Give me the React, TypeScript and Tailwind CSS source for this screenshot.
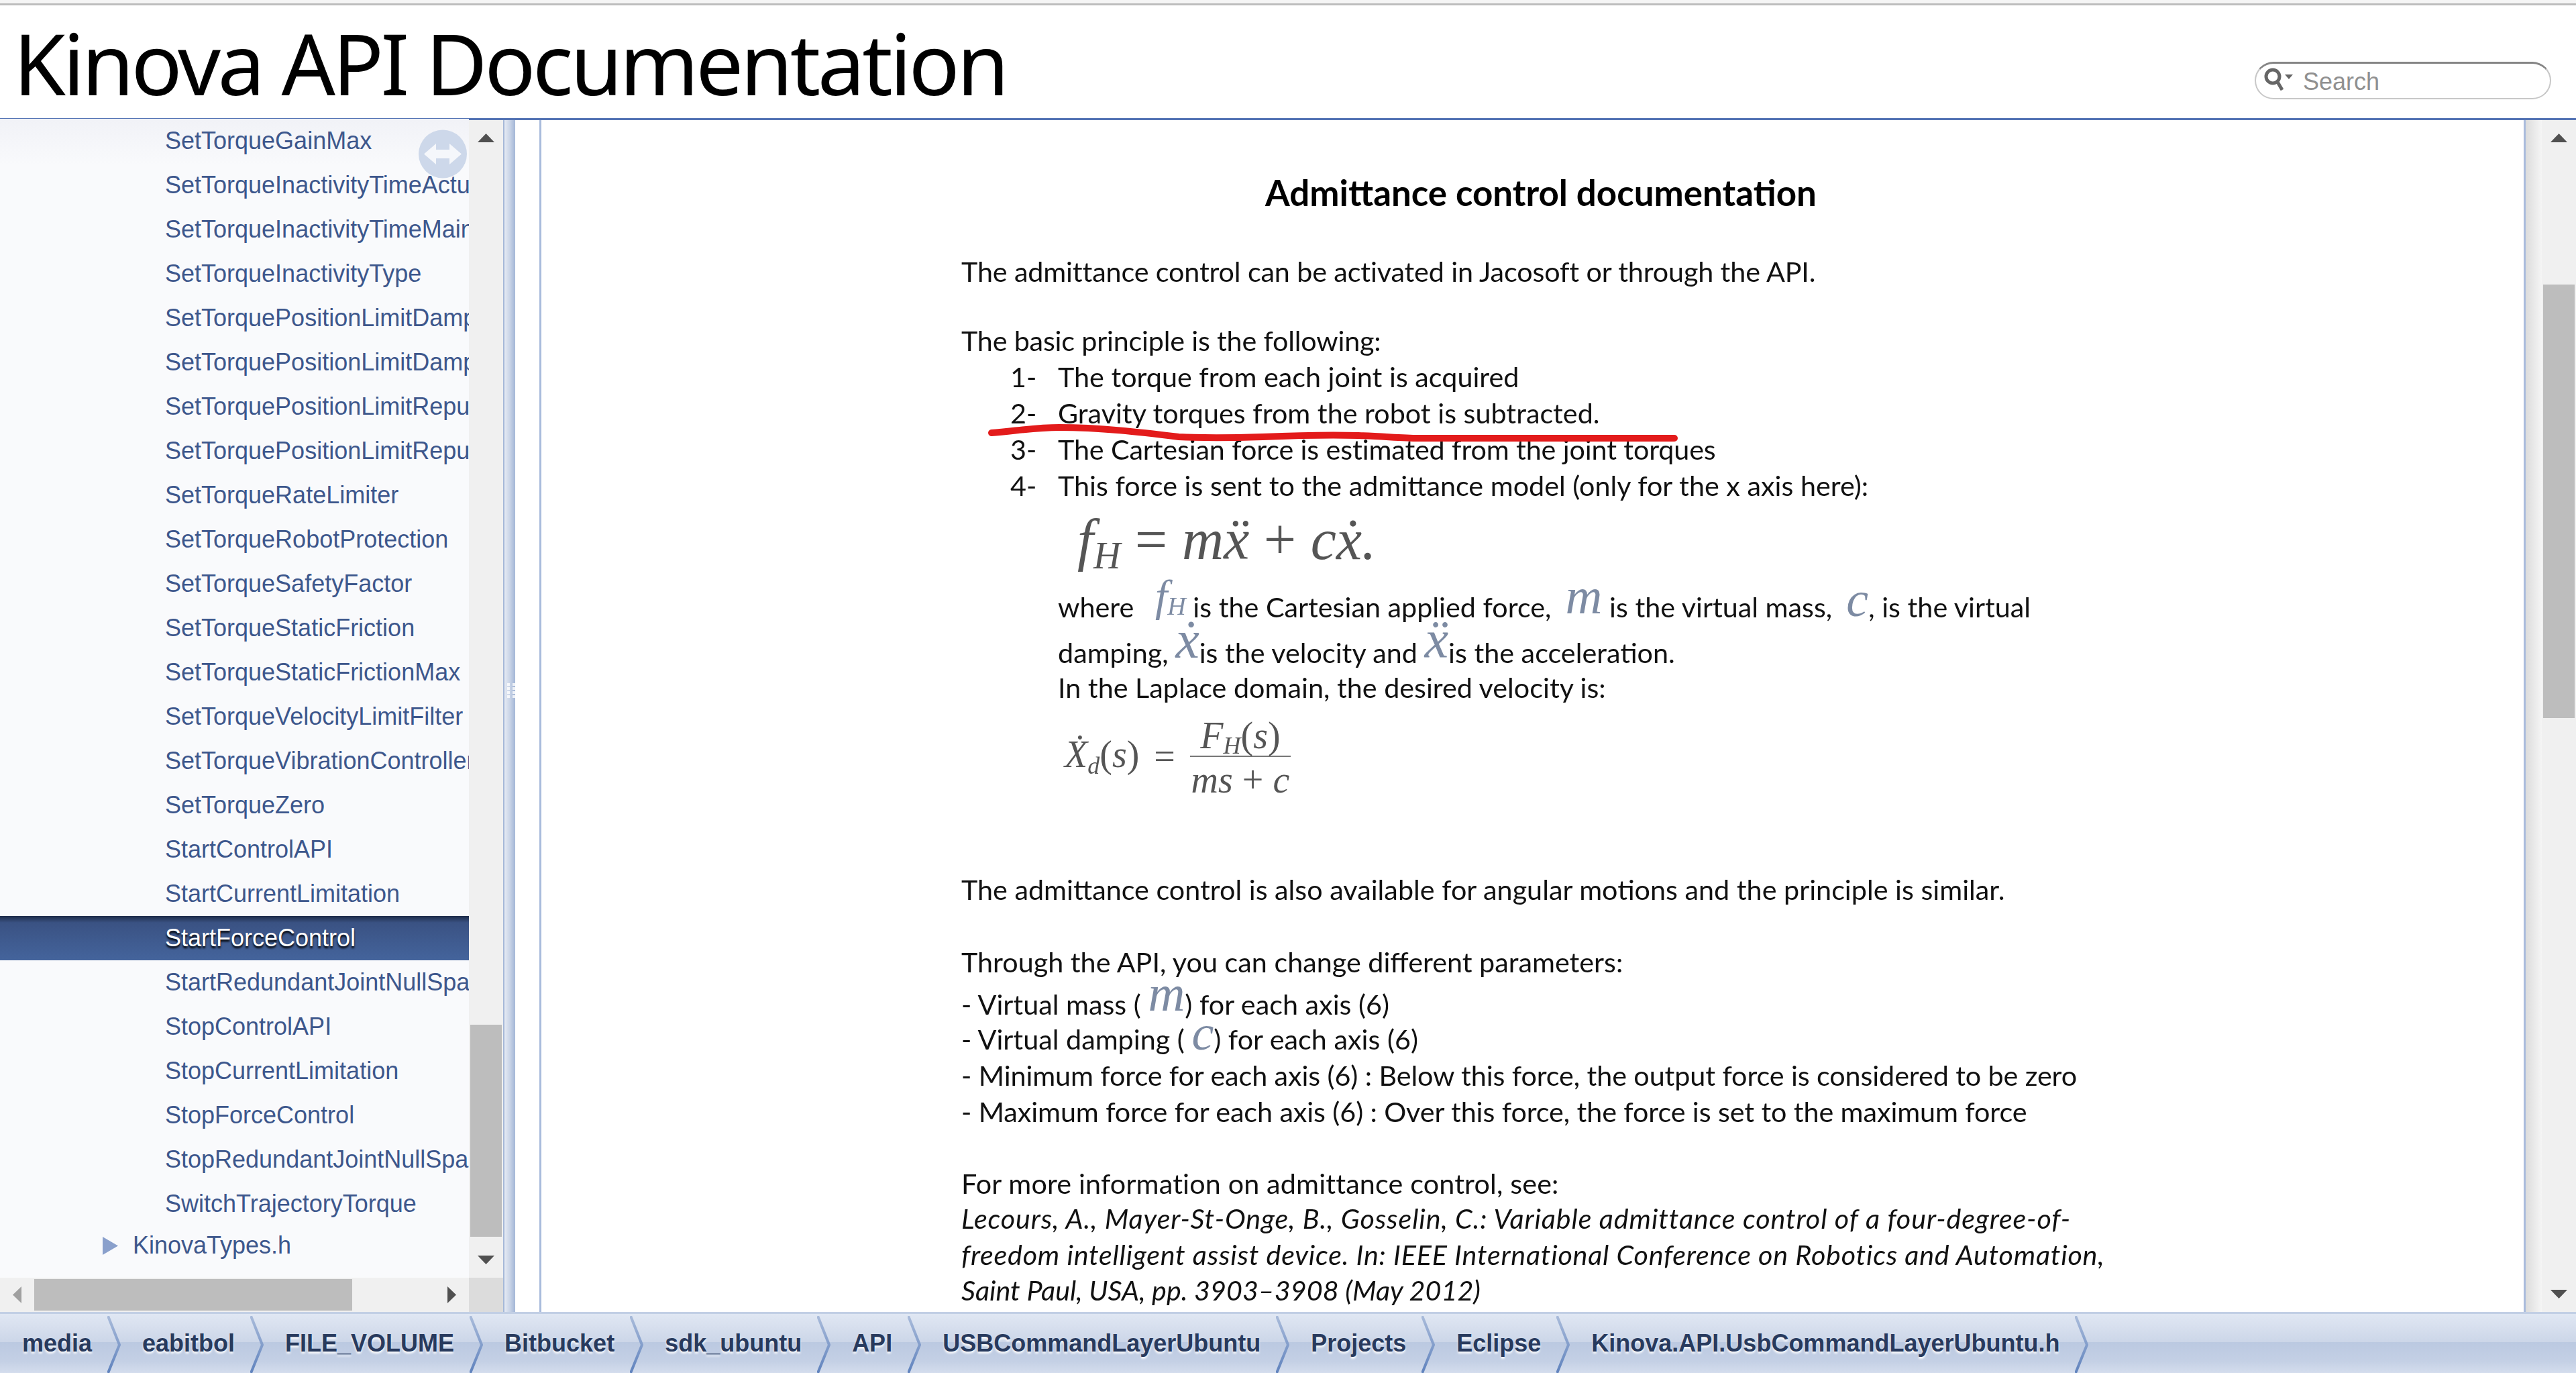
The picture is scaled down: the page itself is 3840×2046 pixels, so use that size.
import React from 'react';

const navItems = [
  'SetTorqueGainMax',
  'SetTorqueInactivityTimeActuator',
  'SetTorqueInactivityTimeMainController',
  'SetTorqueInactivityType',
  'SetTorquePositionLimitDampingGain',
  'SetTorquePositionLimitDampingMax',
  'SetTorquePositionLimitRepulsGain',
  'SetTorquePositionLimitRepulsMax',
  'SetTorqueRateLimiter',
  'SetTorqueRobotProtection',
  'SetTorqueSafetyFactor',
  'SetTorqueStaticFriction',
  'SetTorqueStaticFrictionMax',
  'SetTorqueVelocityLimitFilter',
  'SetTorqueVibrationController',
  'SetTorqueZero',
  'StartControlAPI',
  'StartCurrentLimitation',
  'StartForceControl',
  'StartRedundantJointNullSpaceMotion',
  'StopControlAPI',
  'StopCurrentLimitation',
  'StopForceControl',
  'StopRedundantJointNullSpaceMotion',
  'SwitchTrajectoryTorque',
];

const crumbs = [
  'media',
  'eabitbol',
  'FILE_VOLUME',
  'Bitbucket',
  'sdk_ubuntu',
  'API',
  'USBCommandLayerUbuntu',
  'Projects',
  'Eclipse',
  'Kinova.API.UsbCommandLayerUbuntu.h',
];

// Scrollbar arrow, points given per direction
const Arrow = ({ dir, color = '#505050' }: { dir: 'up' | 'down' | 'left' | 'right'; color?: string }) => {
  if (dir === 'up') return <svg width="25" height="13" viewBox="0 0 25 13"><path d="M12.5 0L25 13H0Z" fill={color} /></svg>;
  if (dir === 'down') return <svg width="25" height="13" viewBox="0 0 25 13"><path d="M0 0H25L12.5 13Z" fill={color} /></svg>;
  if (dir === 'left') return <svg width="13" height="25" viewBox="0 0 13 25"><path d="M13 0V25L0 12.5Z" fill={color} /></svg>;
  return <svg width="13" height="25" viewBox="0 0 13 25"><path d="M0 0L13 12.5L0 25Z" fill={color} /></svg>;
};

const Chevron = () => (
  <svg width="20" height="85" viewBox="0 0 20 85" className="shrink-0 self-end blur-[0.6px]">
    <defs>
      <linearGradient id="chev" x1="0" y1="0" x2="0" y2="1">
        <stop offset="0" stopColor="#a9bbda" />
        <stop offset="1" stopColor="#5f82bd" />
      </linearGradient>
    </defs>
    <path d="M1 0L18 43L1 85" fill="none" stroke="url(#chev)" strokeWidth="4" />
  </svg>
);

// Display formula text from the pasted image
const M = ({ children, className = '' }: { children: React.ReactNode; className?: string }) => (
  <span className={`font-['Liberation_Serif',serif] italic leading-none text-[#555] ${className}`}>{children}</span>
);

// Inline symbol, must not stretch the text line
const IM = ({ children, className = '' }: { children: React.ReactNode; className?: string }) => (
  <span className={`font-['Liberation_Serif',serif] italic leading-[0px] text-[#7d8ba3] ${className}`}>{children}</span>
);

const Line = ({ children, className = '' }: { children: React.ReactNode; className?: string }) => (
  <div className={`h-[54px] leading-[54px] whitespace-pre ${className}`}>{children}</div>
);

const ListLine = ({ n, children, className = '' }: { n: string; children: React.ReactNode; className?: string }) => (
  <div className="flex h-[54px] leading-[54px] pl-[73px] whitespace-pre">
    <span className="w-[71px]">{n}-</span>
    <span className={className}>{children}</span>
  </div>
);

export default function App() {
  return (
    <div className="flex h-screen w-screen flex-col overflow-hidden bg-white font-['Liberation_Sans',sans-serif]">
      <div className="h-[5px] shrink-0 bg-[#f5f5f5]" />
      <div className="h-[3px] shrink-0 bg-[#bdbdbd]" />

      {/* Title bar */}
      <div className="flex h-[171px] shrink-0 items-start justify-between border-b-[3px] border-[#5373b4] pl-[20px] pr-[37px]">
        <div className="mt-[5px] font-['Noto_Sans',sans-serif] text-[126px] leading-[160px] tracking-[-4.3px] text-black whitespace-pre">Kinova API Documentation</div>
        <div className="mt-[84px] flex h-[56px] w-[442px] items-center rounded-full border-2 border-[#c8c8c8] border-t-[3px] border-t-[#858585] pl-[12px]">
          <svg width="44" height="40" viewBox="0 0 44 40" className="shrink-0">
            <circle cx="13" cy="13" r="10" fill="none" stroke="#666" strokeWidth="5" />
            <path d="M20 21L27 33" stroke="#666" strokeWidth="5" />
            <path d="M31 10H43L37 17Z" fill="#666" />
          </svg>
          <span className="ml-[14px] mt-[3px] text-[36px] text-[#909090]">Search</span>
        </div>
      </div>

      <div className="flex min-h-0 flex-1">
        {/* Nav tree */}
        <div className="relative flex w-[750px] shrink-0 flex-col">
          <div className="flex min-h-0 flex-1">
            <div className="-mt-[2px] w-[699px] overflow-hidden bg-[#f9fafc] bg-[linear-gradient(#f1f2f7,#f9fafc_70px)]">
              {navItems.map((item) =>
                item === 'StartForceControl' ? (
                  <div
                    key={item}
                    className="h-[66px] bg-[linear-gradient(#1e2c4a,#3a5283_10px,#44649c)] pl-[246px] text-[36px] leading-[66px] text-white whitespace-nowrap [text-shadow:0_3px_3px_#000]"
                  >
                    {item}
                  </div>
                ) : (
                  <div key={item} className="h-[66px] pl-[246px] text-[36px] leading-[66px] text-[#3d578c] whitespace-nowrap">
                    {item}
                  </div>
                ),
              )}
              <div className="flex h-[58px] items-center pl-[153px] text-[36px] text-[#3d578c]">
                <svg width="23" height="27" viewBox="0 0 23 27" className="mr-[22px]"><path d="M0 0L23 13.5L0 27Z" fill="#8aa0cc" /></svg>
                KinovaTypes.h
              </div>
            </div>
            <div className="flex w-[51px] flex-col items-center bg-[#f0f0f0]">
              <div className="mt-[20px]"><Arrow dir="up" /></div>
              <div className="flex-1" />
              <div className="h-[316px] w-[47px] bg-[#bdbdbd]" />
              <div className="mt-[28px] mb-[20px]"><Arrow dir="down" /></div>
            </div>
          </div>
          <div className="flex h-[51px] shrink-0">
            <div className="flex w-[699px] items-center bg-[#f0f0f0]">
              <div className="ml-[19px]"><Arrow dir="left" color="#a0a0a0" /></div>
              <div className="ml-[19px] h-[47px] w-[474px] bg-[#bdbdbd]" />
              <div className="ml-[142px]"><Arrow dir="right" /></div>
            </div>
            <div className="w-[51px] bg-[#dcdcdc]" />
          </div>

          {/* Sync button sits over the list */}
          <svg width="72" height="73" viewBox="0 0 72 73" className="absolute left-[624px] top-[14px]">
            <circle cx="36" cy="36.5" r="36" fill="#cdd8ea" />
            <path d="M8 36.5L26 21V30H46V21L64 36.5L46 52V43H26V52Z" fill="#f5f7fb" />
          </svg>
        </div>

        {/* Splitter */}
        <div className="relative w-[18px] shrink-0 border-l-[2px] border-[#a5b8d8] bg-[linear-gradient(90deg,#e6ebf4,#c9d4e7_50%,#a3b6d6)]">
          <div className="absolute left-[4px] top-[839px] grid grid-cols-2 gap-x-[4px] gap-y-[2px] opacity-80">
            {Array.from({ length: 8 }).map((_, i) => (
              <div key={i} className="h-[4px] w-[4px] bg-white" />
            ))}
          </div>
        </div>

        {/* Document */}
        <div className="w-[36px] shrink-0 bg-white" />
        <div className="w-[3px] shrink-0 bg-[#a9bbdc]" />
        <div className="relative min-w-0 flex-1 overflow-hidden bg-white">
          <div className="w-fit pl-[626px] pt-[81px] font-['Lato',sans-serif] text-[41.3px] text-[#111] blur-[0.6px]">
            <div className="h-[54px] w-[1728px] text-center text-[52.9px] leading-[54px] font-bold text-black">Admittance control documentation</div>
            <Line className="mt-[63px] tracking-[-0.14px]">The admittance control can be activated in Jacosoft or through the API.</Line>
            <Line className="mt-[49px] tracking-[-0.2px]">The basic principle is the following:</Line>
            <ListLine n="1">The torque from each joint is acquired</ListLine>
            <ListLine n="2">Gravity torques from the robot is subtracted.</ListLine>
            <ListLine n="3" className="tracking-[-0.13px]">The Cartesian force is estimated from the joint torques</ListLine>
            <ListLine n="4">This force is sent to the admittance model (only for the x axis here):</ListLine>

            <div className="ml-[173px] mt-[18px] flex h-[80px] items-center text-[86px]">
              <M>f<span className="align-[-14px] text-[56px]">H</span> <span className="not-italic">=</span> mẍ <span className="not-italic">+</span> cẋ.</M>
            </div>

            <Line className="ml-[144px] mt-[29px]">
              where   <IM className="align-[10px] text-[66px]">f<span className="align-[-6px] text-[38px]">H</span></IM> is the Cartesian applied force,  <IM className="align-[6px] text-[76px]">m</IM> is the virtual mass,  <IM className="align-[2px] text-[74px]">c</IM>, is the virtual
            </Line>
            <Line className="ml-[144px] mt-[14px] !h-[52px]">
              damping, <IM className="align-[8px] text-[80px]">ẋ</IM>is the velocity and <IM className="align-[8px] text-[80px]">ẍ</IM>is the acceleration.
            </Line>
            <Line className="ml-[144px]">In the Laplace domain, the desired velocity is:</Line>

            <div className="ml-[154px] mt-[11px] flex h-[130px] items-center gap-[22px] text-[56px]">
              <M>Ẋ<span className="align-[-10px] text-[36px]">d</span><span className="not-italic">(</span>s<span className="not-italic">)</span></M>
              <M className="not-italic">=</M>
              <div className="flex flex-col items-center">
                <div className="h-[66px] w-[150px] border-b-2 border-[#777] text-center leading-[64px]">
                  <M>F<span className="align-[-8px] text-[36px]">H</span><span className="not-italic">(</span>s<span className="not-italic">)</span></M>
                </div>
                <div className="h-[64px] leading-[64px]"><M>ms <span className="not-italic">+</span> c</M></div>
              </div>
            </div>

            <Line className="mt-[106px]">The admittance control is also available for angular motions and the principle is similar.</Line>
            <Line className="mt-[54px]">Through the API, you can change different parameters:</Line>
            <Line className="mt-[9px] !h-[52px]">- Virtual mass ( <IM className="align-[6px] text-[76px]">m</IM>) for each axis (6)</Line>
            <Line>- Virtual damping ( <IM className="text-[74px]">c</IM>) for each axis (6)</Line>
            <Line className="tracking-[-0.1px]">- Minimum force for each axis (6) : Below this force, the output force is considered to be zero</Line>
            <Line className="tracking-[-0.1px]">- Maximum force for each axis (6) : Over this force, the force is set to the maximum force</Line>
            <Line className="mt-[53px] !h-[52px] tracking-[0.15px]">For more information on admittance control, see:</Line>
            <Line className="italic tracking-[0.87px]">Lecours, A., Mayer-St-Onge, B., Gosselin, C.: Variable admittance control of a four-degree-of-</Line>
            <Line className="italic !h-[53px] tracking-[0.75px]">freedom intelligent assist device. In: IEEE International Conference on Robotics and Automation,</Line>
            <Line className="italic">Saint Paul, USA, pp. 3903–3908 (May 2012)</Line>
          </div>

          {/* Red pen mark drawn over the text */}
          <svg width="1040" height="30" viewBox="1472 630 1040 30" className="absolute left-[665px] top-[451px]">
            <path
              d="M1478 645C1510 643 1540 637 1579 637C1640 637 1700 644 1757 651C1800 653 1850 652 1882 651C1930 649 1990 648 2025 649C2060 650 2090 653 2114 653H2496"
              fill="none"
              stroke="#e31b1b"
              strokeWidth="10"
              strokeLinecap="round"
            />
          </svg>
        </div>

        {/* Document scrollbar */}
        <div className="w-[3px] shrink-0 bg-[#a9bbdc]" />
        <div className="w-[24px] shrink-0 bg-[linear-gradient(90deg,#dcdcdc,#f5f5f5)]" />
        <div className="flex w-[51px] shrink-0 flex-col items-center bg-[#f0f0f0]">
          <div className="mt-[20px]"><Arrow dir="up" /></div>
          <div className="mt-[212px] h-[646px] w-[47px] bg-[#bdbdbd]" />
          <div className="flex-1" />
          <div className="mb-[20px]"><Arrow dir="down" /></div>
        </div>
      </div>

      {/* Nav path */}
      <div className="flex h-[91px] shrink-0 items-center border-t-[3px] border-[#c2cfe5] bg-[linear-gradient(#e0e7f3,#ccd6e8_48%,#bbc9e1_48%,#c4d0e5_80%,#d4dded)] pl-[33px] text-[36px] font-bold text-[#283a5d]">
        {crumbs.map((c) => (
          <React.Fragment key={c}>
            <span className="whitespace-nowrap [text-shadow:0_3px_3px_rgba(255,255,255,0.9)]">{c}</span>
            <span className="ml-[23px] mr-[32px] flex h-full items-end"><Chevron /></span>
          </React.Fragment>
        ))}
      </div>
    </div>
  );
}
